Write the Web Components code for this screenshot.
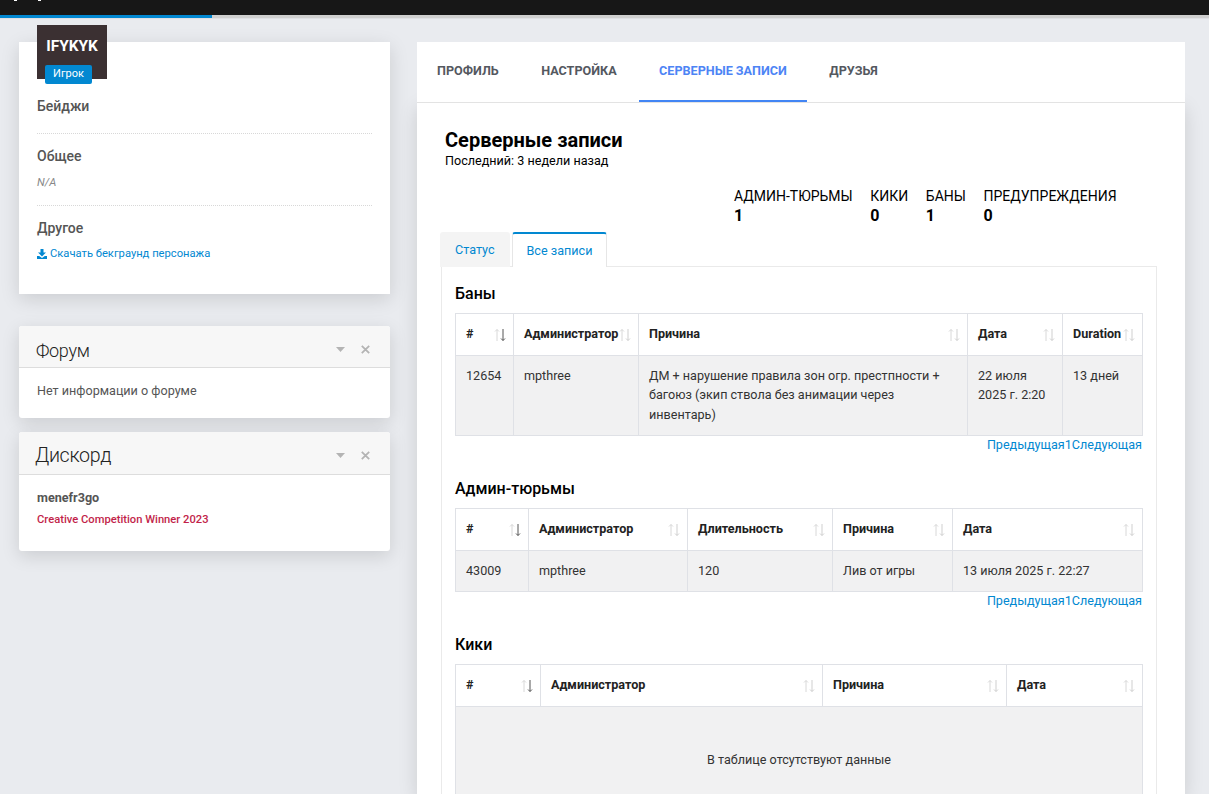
<!DOCTYPE html>
<html lang="ru">
<head>
<meta charset="utf-8">
<title>Серверные записи</title>
<style>
    html, body {
        margin: 0;
        height: 794px;
        overflow: hidden;
        background: #e9ebef;
        font-family: Roboto, "Liberation Sans", sans-serif;
    }
</style>
</head>
<body>
<top-bar></top-bar>
<page-layout>
    <div slot="side">
        <profile-card></profile-card>
        <side-card heading="Форум" size="18">Нет информации о форуме</side-card>
        <side-card heading="Дискорд" size="19.6" tall><discord-info></discord-info></side-card>
    </div>
    <div slot="main">
        <nav-tabs></nav-tabs>
        <records-panel></records-panel>
    </div>
</page-layout>

<script>
class TopBar extends HTMLElement {
    constructor() {
        super();
        this.attachShadow({ mode: "open" });
        this.shadowRoot.innerHTML = `
            <style>
                :host { display: block; }
                .black { height: 15px; background: #171717; display: flex; }
                .tick { width: 3px; height: 1px; background: #fff; margin-left: 14px; }
                .tick + .tick { margin-left: 21px; }
                .progress { height: 3px; background: #cfcfcf; border-bottom: 1px solid #dfe0e4; }
                .progress div { width: 212px; height: 3px; background: #0288d1; }
            </style>
            <div class="black"><div class="tick"></div><div class="tick"></div></div>
            <div class="progress"><div></div></div>
        `;
    }
}

class PageLayout extends HTMLElement {
    constructor() {
        super();
        this.attachShadow({ mode: "open" });
        this.shadowRoot.innerHTML = `
            <style>
                :host {
                    display: grid;
                    grid-template-columns: 371px 768px;
                    column-gap: 27px;
                    padding: 23px 0 0 19px;
                }
            </style>
            <slot name="side"></slot>
            <slot name="main"></slot>
        `;
    }
}

class ProfileCard extends HTMLElement {
    constructor() {
        super();
        this.attachShadow({ mode: "open" });
        this.shadowRoot.innerHTML = `
            <style>
                :host {
                    display: block;
                    position: relative;
                    height: 252px;
                    box-sizing: border-box;
                    padding: 55px 18px 0;
                    background: #fff;
                    box-shadow: 0 5px 18px rgba(0, 0, 0, .13);
                    color: #555;
                }
                .avatar {
                    position: absolute;
                    left: 18px;
                    top: -17px;
                    width: 70px;
                    height: 54px;
                    background: #3b3032;
                    color: #fff;
                    font-weight: 700;
                    font-size: 15.4px;
                    line-height: 20px;
                    text-align: center;
                    padding-top: 11px;
                    box-sizing: border-box;
                }
                .badge {
                    position: absolute;
                    left: 8px;
                    top: 40px;
                    width: 47px;
                    height: 19px;
                    background: #0288d1;
                    border-radius: 2px;
                    font-size: 11px;
                    font-weight: 400;
                    line-height: 18px;
                }
                h4 { margin: 0; font-size: 14px; font-weight: 500; line-height: 18px; color: #555; }
                .sect { border-bottom: 1px dotted #d8d8d8; }
                .a { height: 36px; }
                .b { padding-top: 13px; height: 58px; }
                .c { padding-top: 13px; }
                .na { font-size: 11.2px; font-style: italic; color: #888; margin-top: 11px; line-height: 13px; }
                a {
                    display: flex;
                    align-items: center;
                    gap: 3px;
                    margin-top: 10px;
                    font-size: 11.2px;
                    line-height: 14px;
                    color: #0288d1;
                    text-decoration: none;
                }
                svg { width: 10px; height: 10px; fill: #0288d1; }
            </style>
            <div class="avatar">IFYKYK<div class="badge">Игрок</div></div>
            <div class="sect a"><h4>Бейджи</h4></div>
            <div class="sect b"><h4>Общее</h4><div class="na">N/A</div></div>
            <div class="c">
                <h4>Другое</h4>
                <a href="#"><svg viewBox="0 0 10 10"><path d="M3.5 0h3v3.6H9L5 7.4 1 3.6h2.5zM0 7h2.2L5 9l2.8-2H10v3H0z"/></svg>Скачать бекграунд персонажа</a>
            </div>
        `;
    }
}

class SideCard extends HTMLElement {
    constructor() {
        super();
        this.attachShadow({ mode: "open" });
        const size = this.getAttribute("size") || "18";
        this.shadowRoot.innerHTML = `
            <style>
                :host {
                    display: block;
                    margin-top: 32px;
                    background: #fff;
                    border-radius: 3px;
                    overflow: hidden;
                    box-shadow: 0 5px 18px rgba(0, 0, 0, .13);
                    color: #555;
                }
                :host([tall]) { margin-top: 14px; }
                header {
                    height: 41px;
                    background: #f7f7f7;
                    border-bottom: 1px solid #ddd;
                    display: flex;
                    align-items: center;
                    padding-left: 17px;
                    padding-right: 20px;
                }
                :host([tall]) header { height: 42px; }
                h3 {
                    flex: 1;
                    margin: 7px 0 0;
                    font-size: ${size}px;
                    font-weight: 300;
                    letter-spacing: -.3px;
                    color: #222;
                }
                :host([tall]) h3 { margin: 5px 0 0 -1px; }
                .icons { display: flex; align-items: center; gap: 16px; margin-top: 5px; }
                .body { padding: 14px 18px 19px; font-size: 12.6px; line-height: 17px; min-height: 16px; }
                :host([tall]) .body { padding: 14px 18px 23px; }
            </style>
            <header>
                <h3>${this.getAttribute("heading")}</h3>
                <div class="icons">
                    <svg width="9" height="5" viewBox="0 0 9 5"><path d="M0 0h9L4.5 5z" fill="#b4b4b4"/></svg>
                    <svg width="9" height="9" viewBox="0 0 9 9"><path d="M.8.8l7.4 7.4M8.2.8L.8 8.2" stroke="#b4b4b4" stroke-width="1.8" fill="none"/></svg>
                </div>
            </header>
            <div class="body"><slot></slot></div>
        `;
    }
}

class DiscordInfo extends HTMLElement {
    constructor() {
        super();
        this.attachShadow({ mode: "open" });
        this.shadowRoot.innerHTML = `
            <style>
                :host { display: block; }
                b { display: block; font-size: 12.6px; line-height: 18px; font-weight: 700; color: #555; }
                span { display: block; margin-top: 5px; font-size: 11.2px; line-height: 16px; font-weight: 500; color: #c21f4a; }
            </style>
            <b>menefr3go</b>
            <span>Creative Competition Winner 2023</span>
        `;
    }
}

class NavTabs extends HTMLElement {
    constructor() {
        super();
        this.attachShadow({ mode: "open" });
        this.shadowRoot.innerHTML = `
            <style>
                :host {
                    display: flex;
                    height: 60px;
                    background: #fff;
                    border-bottom: 1px solid #e3e3e3;
                    font-size: 12.6px;
                    font-weight: 700;
                    color: #54585f;
                    position: relative;
                    z-index: 1;
                }
                div {
                    padding: 0 20px;
                    margin-right: 2.5px;
                    line-height: 58px;
                    height: 60px;
                    box-sizing: border-box;
                    white-space: nowrap;
                }
                div:first-child { margin-left: -1.5px; }
                .on { color: #4d84f5; border-bottom: 2px solid #4285f4; }
            </style>
            <div>ПРОФИЛЬ</div>
            <div>НАСТРОЙКА</div>
            <div class="on">СЕРВЕРНЫЕ ЗАПИСИ</div>
            <div>ДРУЗЬЯ</div>
        `;
    }
}

class RecordsPanel extends HTMLElement {
    constructor() {
        super();
        this.attachShadow({ mode: "open" });
        this.shadowRoot.innerHTML = `
            <style>
                :host {
                    display: block;
                    background: #fff;
                    box-shadow: 0 5px 18px rgba(0, 0, 0, .13);
                    padding: 26px 28px 0 23px;
                    height: 691px;
                    box-sizing: border-box;
                    overflow: hidden;
                    color: #000;
                }
                h2 { margin: 0 0 0 5px; font-size: 20px; line-height: 22px; font-weight: 700; }
                .last { margin-left: 5px; font-size: 12.6px; line-height: 15px; margin-top: 2px; }
                .stats {
                    display: flex;
                    gap: 17.6px;
                    margin: 19px 0 0 294px;
                    font-size: 14px;
                    line-height: 19px;
                }
                .stats b { display: block; font-size: 16px; line-height: 20px; }
                .tabs { display: flex; gap: 2px; margin-top: 6px; font-size: 12.6px; position: relative; z-index: 1; }
                .tabs div {
                    height: 35px;
                    box-sizing: border-box;
                    padding: 0 15px;
                    line-height: 35px;
                    color: #0288d1;
                    background: #f4f4f4;
                    border-radius: 3px 3px 0 0;
                }
                .tabs .on {
                    background: #fff;
                    border: 1px solid #e6e6e6;
                    border-top: 2px solid #0288d1;
                    border-bottom: 0;
                    line-height: 34px;
                    padding: 0 14px;
                }
                .box {
                    margin: -1px 0 0 1px;
                    border: 1px solid #eaeaea;
                    padding: 17px 14px 0 13px;
                    height: 700px;
                }
                h3 { margin: 0; font-size: 16px; line-height: 20px; font-weight: 500; }
                record-table { margin-top: 9px; }
                .next { margin-top: 25px; }
                .last-h { margin-top: 25px; }
            </style>
            <h2>Серверные записи</h2>
            <div class="last">Последний: 3 недели назад</div>
            <div class="stats">
                <div>АДМИН-ТЮРЬМЫ<b>1</b></div>
                <div>КИКИ<b>0</b></div>
                <div>БАНЫ<b>1</b></div>
                <div>ПРЕДУПРЕЖДЕНИЯ<b>0</b></div>
            </div>
            <div class="tabs"><div>Статус</div><div class="on">Все записи</div></div>
            <div class="box">
                <h3>Баны</h3>
                <record-table id="bans" pager></record-table>
                <h3 class="next">Админ-тюрьмы</h3>
                <record-table id="jails" pager></record-table>
                <h3 class="last-h">Кики</h3>
                <record-table id="kicks"></record-table>
            </div>
        `;
        const q = (id) => this.shadowRoot.getElementById(id);
        q("bans").setData(
            [["#", 58, "dark"], ["Администратор", 125], ["Причина", 329], ["Дата", 95], ["Duration", 80]],
            [["12654", "mpthree", "ДМ + нарушение правила зон огр. престпности + багоюз (экип ствола без анимации через инвентарь)", "22 июля<br>2025 г. 2:20", "13 дней"]]
        );
        q("jails").setData(
            [["#", 73, "dark"], ["Администратор", 159], ["Длительность", 145], ["Причина", 120], ["Дата", 190]],
            [["43009", "mpthree", "120", "Лив от игры", "13 июля 2025 г. 22:27"]]
        );
        q("kicks").setData(
            [["#", 85, "dark"], ["Администратор", 282], ["Причина", 184], ["Дата", 136]],
            [],
            "В таблице отсутствуют данные"
        );
    }
}

class RecordTable extends HTMLElement {
    constructor() {
        super();
        this.attachShadow({ mode: "open" });
        this.shadowRoot.innerHTML = `
            <style>
                :host { display: block; font-size: 12.6px; }
                table {
                    width: 687px;
                    table-layout: fixed;
                    border-collapse: collapse;
                    color: #333;
                    line-height: 19.5px;
                }
                th, td {
                    border: 1px solid #dfe1e6;
                    padding: 10px 10px 11px;
                    text-align: left;
                    vertical-align: top;
                }
                th {
                    position: relative;
                    height: 41.5px;
                    box-sizing: border-box;
                    padding: 10px 10px 0;
                    font-weight: 700;
                    color: #222;
                    white-space: nowrap;
                }
                td { background: #f1f1f2; }
                td.empty { height: 107px; box-sizing: border-box; padding: 0; text-align: center; vertical-align: middle; }
                th svg { position: absolute; right: 7px; top: 14px; }
                .pager { width: 687px; text-align: right; color: #0288d1; line-height: 18px; }
            </style>
            <div id="root"></div>
        `;
    }

    sortIcon(state) {
        const down = state === "dark" ? "#555" : "#cfcfcf";
        return `<svg width="12" height="14" viewBox="0 0 12 14" fill="none" stroke-width="1">
            <path d="M3 13V1.5M1 3.5l2-2 2 2" stroke="#d8d8d8"/>
            <path d="M9 1v11.5M7 10.5l2 2 2-2" stroke="${down}"/>
        </svg>`;
    }

    setData(cols, rows, emptyText) {
        const colgroup = cols.map(c => `<col style="width:${c[1]}px">`).join("");
        const head = cols.map(c => `<th>${c[0]}${this.sortIcon(c[2])}</th>`).join("");
        let body = rows.map(r => `<tr>${r.map(v => `<td>${v}</td>`).join("")}</tr>`).join("");
        if (!rows.length) {
            body = `<tr><td class="empty" colspan="${cols.length}">${emptyText}</td></tr>`;
        }
        const pager = this.hasAttribute("pager") ? `<div class="pager">Предыдущая1Следующая</div>` : "";
        this.shadowRoot.getElementById("root").innerHTML =
            `<table><colgroup>${colgroup}</colgroup><thead><tr>${head}</tr></thead><tbody>${body}</tbody></table>${pager}`;
    }
}

customElements.define("top-bar", TopBar);
customElements.define("page-layout", PageLayout);
customElements.define("profile-card", ProfileCard);
customElements.define("side-card", SideCard);
customElements.define("discord-info", DiscordInfo);
customElements.define("nav-tabs", NavTabs);
customElements.define("record-table", RecordTable);
customElements.define("records-panel", RecordsPanel);
</script>
</body>
</html>
